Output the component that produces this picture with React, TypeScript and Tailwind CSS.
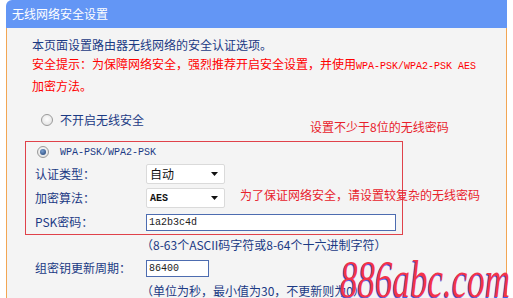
import React from "react";

function Radio({ checked }: { checked?: boolean }) {
  return (
    <div className="w-[12px] h-[12px] rounded-full border border-[#9a9a9a] bg-[radial-gradient(circle_at_50%_40%,#ffffff,#dcdcdc)] flex items-center justify-center shrink-0">
      {checked && (
        <div className="w-[6px] h-[6px] rounded-full bg-[radial-gradient(circle_at_40%_35%,#7aa0d0,#1d3c70)]" />
      )}
    </div>
  );
}

function Select({ value, mono }: { value: string; mono?: boolean }) {
  return (
    <div className="w-[79px] h-[20px] bg-white border border-[#dadada] rounded-[2px] flex items-center justify-between pl-[3px] pr-[6px]">
      <span
        className={
          mono
            ? "font-['Liberation_Mono',monospace] text-[10px] text-[#111] font-bold"
            : "text-[12px] text-[#111]"
        }
      >
        {value}
      </span>
      <svg width="7" height="4" viewBox="0 0 7 4">
        <path d="M0 0H7L3.5 4Z" fill="#111" />
      </svg>
    </div>
  );
}

export default function App() {
  const navy = "text-[#1b3a84]";
  return (
    <div className="relative w-[513px] h-[298px] overflow-hidden bg-white font-['Noto_Sans_CJK_SC','Noto_Sans',sans-serif] text-[12px]">
      <div className="ml-[6px] w-[501px] h-full flex flex-col">
        <div className="h-[28px] shrink-0 rounded-tl-[6px] bg-[#6396f5] pl-[6px] text-white text-[12px] leading-[28px]">
          无线网络安全设置
        </div>
        <div className="flex-1 border-x border-[#f2a653] bg-[#f4f4f4] pl-[18px] pt-[7px]">
          <div className="ml-[7px] leading-[19px]">
            <div className={navy}>本页面设置路由器无线网络的安全认证选项。</div>
            <div className="text-[#ff0000]">
              安全提示：为保障网络安全，强烈推荐开启安全设置，并使用
              <span className="font-['Liberation_Mono',monospace] text-[10px]">WPA-PSK/WPA2-PSK AES</span>
            </div>
            <div className="text-[#ff0000]">加密方法。</div>
          </div>
          <div className="mt-[15px] h-[20px] flex items-center pl-[16px] gap-[7px]">
            <Radio />
            <span className={navy}>不开启无线安全</span>
          </div>
          <div className="mt-[11px] w-[378px] border border-[#e0424a]">
            <div className="h-[20px] flex items-center pl-[11px] gap-[11px]">
              <Radio checked />
              <span className={`font-['Liberation_Mono',monospace] text-[10px] ${navy}`}>WPA-PSK/WPA2-PSK</span>
            </div>
            <div className="h-[24px] flex items-center pl-[9px]">
              <span className={`w-[111px] ${navy}`}>认证类型：</span>
              <Select value="自动" />
            </div>
            <div className="h-[24px] flex items-center pl-[9px]">
              <span className={`w-[111px] ${navy}`}>加密算法：</span>
              <Select value="AES" mono />
            </div>
            <div className="h-[24px] flex items-center pl-[9px]">
              <span className={`w-[111px] ${navy}`}>PSK密码：</span>
              <div className="w-[250px] h-[17px] bg-white border border-[#4d6cb0] flex items-center pl-[2px]">
                <span className="font-['Liberation_Mono',monospace] text-[10px] text-[#222]">1a2b3c4d</span>
              </div>
            </div>
          </div>
          <div className={`h-[20px] flex items-center pl-[116px] ${navy}`}>
            （8-63个ASCII码字符或8-64个十六进制字符）
          </div>
          <div className="h-[26px] flex items-center pl-[10px]">
            <span className={`w-[111px] ${navy}`}>组密钥更新周期：</span>
            <div className="w-[63px] h-[17px] bg-white border border-[#4d6cb0] flex items-center pl-[2px]">
              <span className="font-['Liberation_Mono',monospace] text-[10px] text-[#222]">86400</span>
            </div>
          </div>
          <div className={`h-[20px] flex items-center pl-[116px] ${navy}`}>
            （单位为秒，最小值为30，不更新则为0）
          </div>
        </div>
      </div>

      <div className="absolute left-[310px] top-[119px] leading-[16px] text-[#e8222c]">
        设置不少于8位的无线密码
      </div>
      <div className="absolute left-[240px] top-[187px] leading-[16px] text-[#e8222c]">
        为了保证网络安全，请设置较复杂的无线密码
      </div>

      <div className="absolute left-[340px] top-[253px] origin-left scale-x-[0.66] font-['Liberation_Serif',serif] italic text-[53px] leading-[53px] text-[#f2334a] [text-shadow:-1px_1px_0_#3f5cf0] whitespace-nowrap">
        886abc.com
      </div>
    </div>
  );
}
